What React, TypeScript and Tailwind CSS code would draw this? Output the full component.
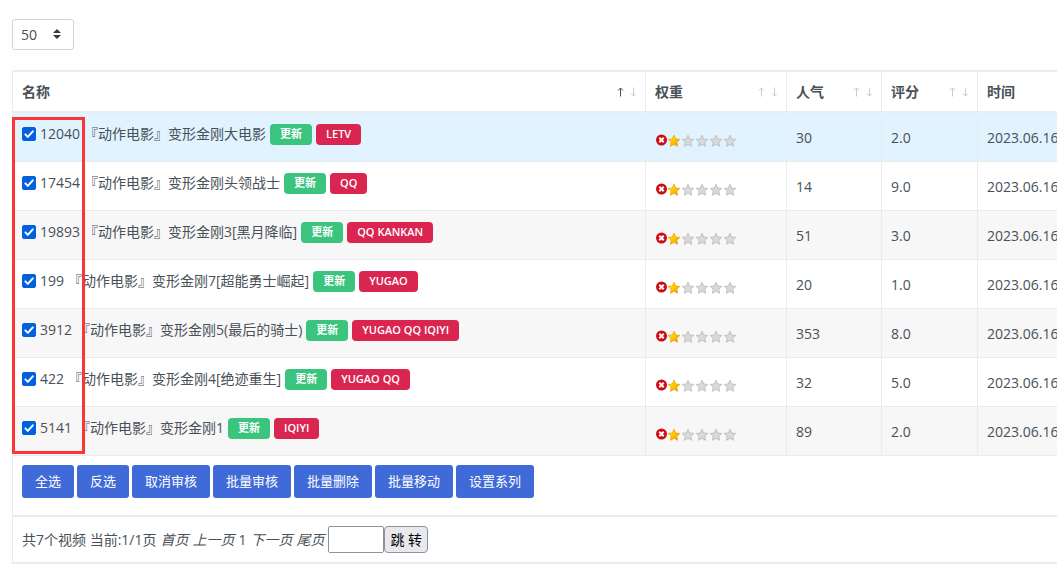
import React, { useState } from "react";

interface Video {
  id: number;
  title: string;
  sources: string;
  hits: number;
  score: string;
  date: string;
}

const VIDEOS: Video[] = [
  { id: 12040, title: "变形金刚大电影", sources: "LETV", hits: 30, score: "2.0", date: "2023.06.16" },
  { id: 17454, title: "变形金刚头领战士", sources: "QQ", hits: 14, score: "9.0", date: "2023.06.16" },
  { id: 19893, title: "变形金刚3[黑月降临]", sources: "QQ KANKAN", hits: 51, score: "3.0", date: "2023.06.16" },
  { id: 199, title: "变形金刚7[超能勇士崛起]", sources: "YUGAO", hits: 20, score: "1.0", date: "2023.06.16" },
  { id: 3912, title: "变形金刚5(最后的骑士)", sources: "YUGAO QQ IQIYI", hits: 353, score: "8.0", date: "2023.06.16" },
  { id: 422, title: "变形金刚4[绝迹重生]", sources: "YUGAO QQ", hits: 32, score: "5.0", date: "2023.06.16" },
  { id: 5141, title: "变形金刚1", sources: "IQIYI", hits: 89, score: "2.0", date: "2023.06.16" },
];

const ACTIONS = ["全选", "反选", "取消审核", "批量审核", "批量删除", "批量移动", "设置系列"];

const ALL_IDS = VIDEOS.map((v) => v.id);

export default function App() {
  const [checked, setChecked] = useState<number[]>(ALL_IDS);

  const toggle = (id: number) =>
    setChecked((prev) => (prev.includes(id) ? prev.filter((x) => x !== id) : [...prev, id]));

  const runAction = (action: string) => {
    if (action === "全选") setChecked(ALL_IDS);
    if (action === "反选") setChecked(ALL_IDS.filter((id) => !checked.includes(id)));
  };

  return (
    <div className="min-h-screen overflow-hidden bg-[#fefefe] pt-[19px] pl-3 font-['Open_Sans','Noto_Sans_CJK_SC',sans-serif] text-sm text-[#495057]">
      {/* PAGE SIZE */}
      <div className="relative mb-5 inline-block align-top">
        <select
          aria-label="每页数量"
          defaultValue="50"
          className="block h-[31px] w-[62px] appearance-none rounded-[3px] border border-[#ced4da] bg-white pl-2 text-sm text-[#495057]"
        >
          <option>10</option>
          <option>50</option>
          <option>100</option>
        </select>
        <svg
          viewBox="0 0 4 5"
          className="pointer-events-none absolute top-2.5 right-[13px] h-2.5 w-2"
          fill="#343a40"
        >
          <path d="M2 0L0 2h4zm0 5L0 3h4z" />
        </svg>
      </div>

      {/* VIDEO TABLE */}
      <div className="relative">
        <table className="w-full min-w-[900px] table-fixed border-separate border-spacing-0 border-t-2 border-l border-[#e9ecef] bg-white text-left">
          <colgroup>
            <col />
            <col className="w-[141px]" />
            <col className="w-[95px]" />
            <col className="w-24" />
            <col className="w-[79px]" />
          </colgroup>
          <thead>
            <tr>
              <HeadCell label="名称" sorted />
              <HeadCell label="权重" />
              <HeadCell label="人气" />
              <HeadCell label="评分" />
              <th className="h-[41px] border-b-2 border-[#e9ecef] px-[9px] py-0 font-bold">时间</th>
            </tr>
          </thead>
          <tbody>
            {VIDEOS.map((video, i) => (
              <tr
                key={video.id}
                className={i === 0 ? "bg-[#e0f3ff]" : i % 2 === 0 ? "bg-[#f7f7f7]" : "bg-white"}
              >
                <td className="h-[49px] border-r border-b border-[#e9ecef] px-[9px] pt-[9px] pb-0 align-top">
                  <div className="flex h-6 items-center gap-1 whitespace-nowrap">
                    <label className="flex items-center gap-1">
                      <Checkbox
                        checked={checked.includes(video.id)}
                        onChange={() => toggle(video.id)}
                      />
                      {video.id}
                    </label>
                    <span>『动作电影』{video.title}</span>
                    <button className="h-[21px] rounded bg-[#3ac47d] px-2.5 text-[11px] font-bold text-white">
                      更新
                    </button>
                    <span className="flex h-[21px] items-center rounded bg-[#d92550] px-2.5 text-[11px] font-semibold text-white">
                      {video.sources}
                    </span>
                  </div>
                </td>
                <td className="border-r border-b border-[#e9ecef] px-[9px] pt-2">
                  <Rating value={1} />
                </td>
                <td className="border-r border-b border-[#e9ecef] px-[9px] pt-0.5">{video.hits}</td>
                <td className="border-r border-b border-[#e9ecef] px-[9px] pt-0.5">{video.score}</td>
                <td className="border-b border-[#e9ecef] pt-0.5 pl-[9px]">{video.date}</td>
              </tr>
            ))}
          </tbody>
          <tfoot>
            <tr>
              <td colSpan={5} className="h-[61px] border-b-2 border-[#e9ecef] px-[9px] pt-[9px] align-top">
                <div className="flex gap-[3px]">
                  {ACTIONS.map((action) => (
                    <button
                      key={action}
                      onClick={() => runAction(action)}
                      className="h-[33px] rounded-[3px] bg-[#3f6ad8] px-[13px] text-[13px] text-white"
                    >
                      {action}
                    </button>
                  ))}
                </div>
              </td>
            </tr>
            <tr>
              <td colSpan={5} className="h-[47px] border-b-2 border-[#e9ecef] px-[9px]">
                <div className="flex items-center gap-1 whitespace-nowrap">
                  <span>共7个视频 当前:1/1页</span>
                  <em>首页</em>
                  <em>上一页</em>
                  <span>1</span>
                  <em>下一页</em>
                  <em>尾页</em>
                  <div className="flex">
                    <input
                      aria-label="页码"
                      className="h-[27px] w-14 rounded-xs border border-[#8f8f9d] bg-white px-1"
                    />
                    <button className="h-[27px] rounded border border-[#8f8f9d] bg-[#e9e9ed] px-[5px] text-black">
                      跳 转
                    </button>
                  </div>
                </div>
              </td>
            </tr>
          </tfoot>
        </table>

        {/* highlight around the id column */}
        <div className="pointer-events-none absolute top-[47px] left-0 h-[337px] w-[73px] border-3 border-[#fc3636]" />
      </div>
    </div>
  );
}

/* --- HELPERS --- */

const HeadCell = ({ label, sorted }: { label: string; sorted?: boolean }) => (
  <th className="h-[41px] border-r border-b-2 border-[#e9ecef] px-[9px] py-0 font-bold">
    <div className="flex items-center justify-between">
      {label}
      <svg width="19" height="10" viewBox="0 0 19 10" fill="none" strokeWidth="1">
        <path d="M3.5 9.5V1M1 3.5L3.5 1L6 3.5" stroke={sorted ? "#495057" : "#c8cacc"} />
        <path d="M16.5 .5V9M14 6.5L16.5 9L19 6.5" stroke="#c8cacc" />
      </svg>
    </div>
  </th>
);

const Checkbox = ({ checked, onChange }: { checked: boolean; onChange: () => void }) => (
  <span className="relative flex">
    <input
      type="checkbox"
      checked={checked}
      onChange={onChange}
      className="size-3.5 appearance-none rounded-xs border border-[#8f8f9d] bg-white checked:border-[#0060df] checked:bg-[#0060df]"
    />
    {checked && (
      <svg viewBox="0 0 14 14" className="pointer-events-none absolute inset-0 size-3.5" fill="none">
        <path
          d="M3.4 7.4L5.8 9.9L10.8 4.3"
          stroke="#fff"
          strokeWidth="2"
          strokeLinecap="round"
          strokeLinejoin="round"
        />
      </svg>
    )}
  </span>
);

const STAR = "M7 1.2L8.7 5L12.8 5.4L9.8 8.2L10.6 12.3L7 10.3L3.4 12.3L4.2 8.2L1.2 5.4L5.3 5Z";

const Rating = ({ value }: { value: number }) => (
  <div className="flex items-center">
    <svg width="12" height="14" viewBox="0 0 12 14">
      <circle cx="6.5" cy="6" r="5.5" fill="#cf0a14" />
      <path d="M4.3 3.8L8.7 8.2M8.7 3.8L4.3 8.2" stroke="#fff" strokeWidth="2" />
    </svg>
    {[1, 2, 3, 4, 5].map((n) => (
      <svg key={n} width="14" height="14" viewBox="0 0 14 14">
        <defs>
          <linearGradient id="gold" x1="0" y1="0" x2="1" y2="1">
            <stop offset="0.3" stopColor="#ffe000" />
            <stop offset="1" stopColor="#f98a00" />
          </linearGradient>
        </defs>
        <path
          d={STAR}
          fill={n <= value ? "url(#gold)" : "#d9d9d9"}
          stroke={n <= value ? "#ee9d10" : "#b9b9b9"}
          strokeWidth="0.8"
          strokeLinejoin="round"
        />
      </svg>
    ))}
  </div>
);
